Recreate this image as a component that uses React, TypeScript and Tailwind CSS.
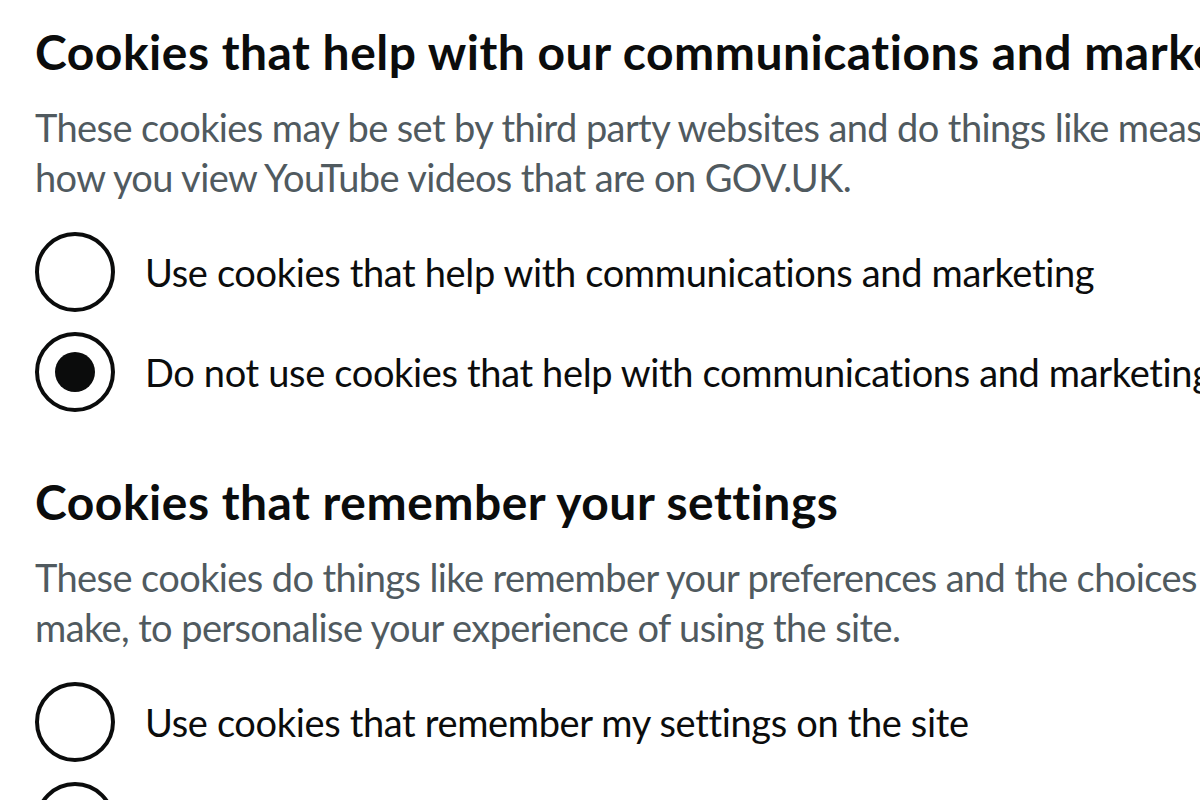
import React from 'react'

const font = { fontFamily: 'Lato, "Noto Sans", Arial, sans-serif' }

type Option = { label: string; checked?: boolean }

function Radio({ label, checked }: Option) {
  return (
    <div className="flex items-center h-[80px] mb-[20px]">
      <span className="flex items-center justify-center w-[80px] h-[80px] shrink-0 rounded-full border-[4px] border-[#0b0c0c] bg-white">
        {checked && <span className="w-[40px] h-[40px] rounded-full bg-[#0b0c0c]" />}
      </span>
      <span className="pl-[30px] text-[38px] leading-[50px] tracking-[-0.35px] text-[#0b0c0c] whitespace-nowrap">{label}</span>
    </div>
  )
}

function Section({ title, hint, options }: { title: string; hint: string[]; options: Option[] }) {
  return (
    <fieldset className="mb-[40px]">
      <h2 className="text-[48px] leading-[60px] font-bold tracking-[0.5px] text-[#0b0c0c] whitespace-nowrap mb-[20px]">{title}</h2>
      <div className="text-[38px] leading-[50px] tracking-[-0.6px] text-[#505a5f] mb-[30px]">
        {hint.map((line) => (
          <p key={line} className="whitespace-nowrap">{line}</p>
        ))}
      </div>
      {options.map((o) => (
        <Radio key={o.label} {...o} />
      ))}
    </fieldset>
  )
}

export default function App() {
  return (
    <div className="w-[1200px] h-[800px] overflow-hidden bg-white pl-[35px] pt-[22px]" style={font}>
      <Section
        title="Cookies that help with our communications and marketing"
        hint={[
          'These cookies may be set by third party websites and do things like measure',
          'how you view YouTube videos that are on GOV.UK.',
        ]}
        options={[
          { label: 'Use cookies that help with communications and marketing' },
          { label: 'Do not use cookies that help with communications and marketing', checked: true },
        ]}
      />
      <Section
        title="Cookies that remember your settings"
        hint={[
          'These cookies do things like remember your preferences and the choices you',
          'make, to personalise your experience of using the site.',
        ]}
        options={[
          { label: 'Use cookies that remember my settings on the site' },
          { label: 'Do not use cookies that remember my settings on the site' },
        ]}
      />
    </div>
  )
}
